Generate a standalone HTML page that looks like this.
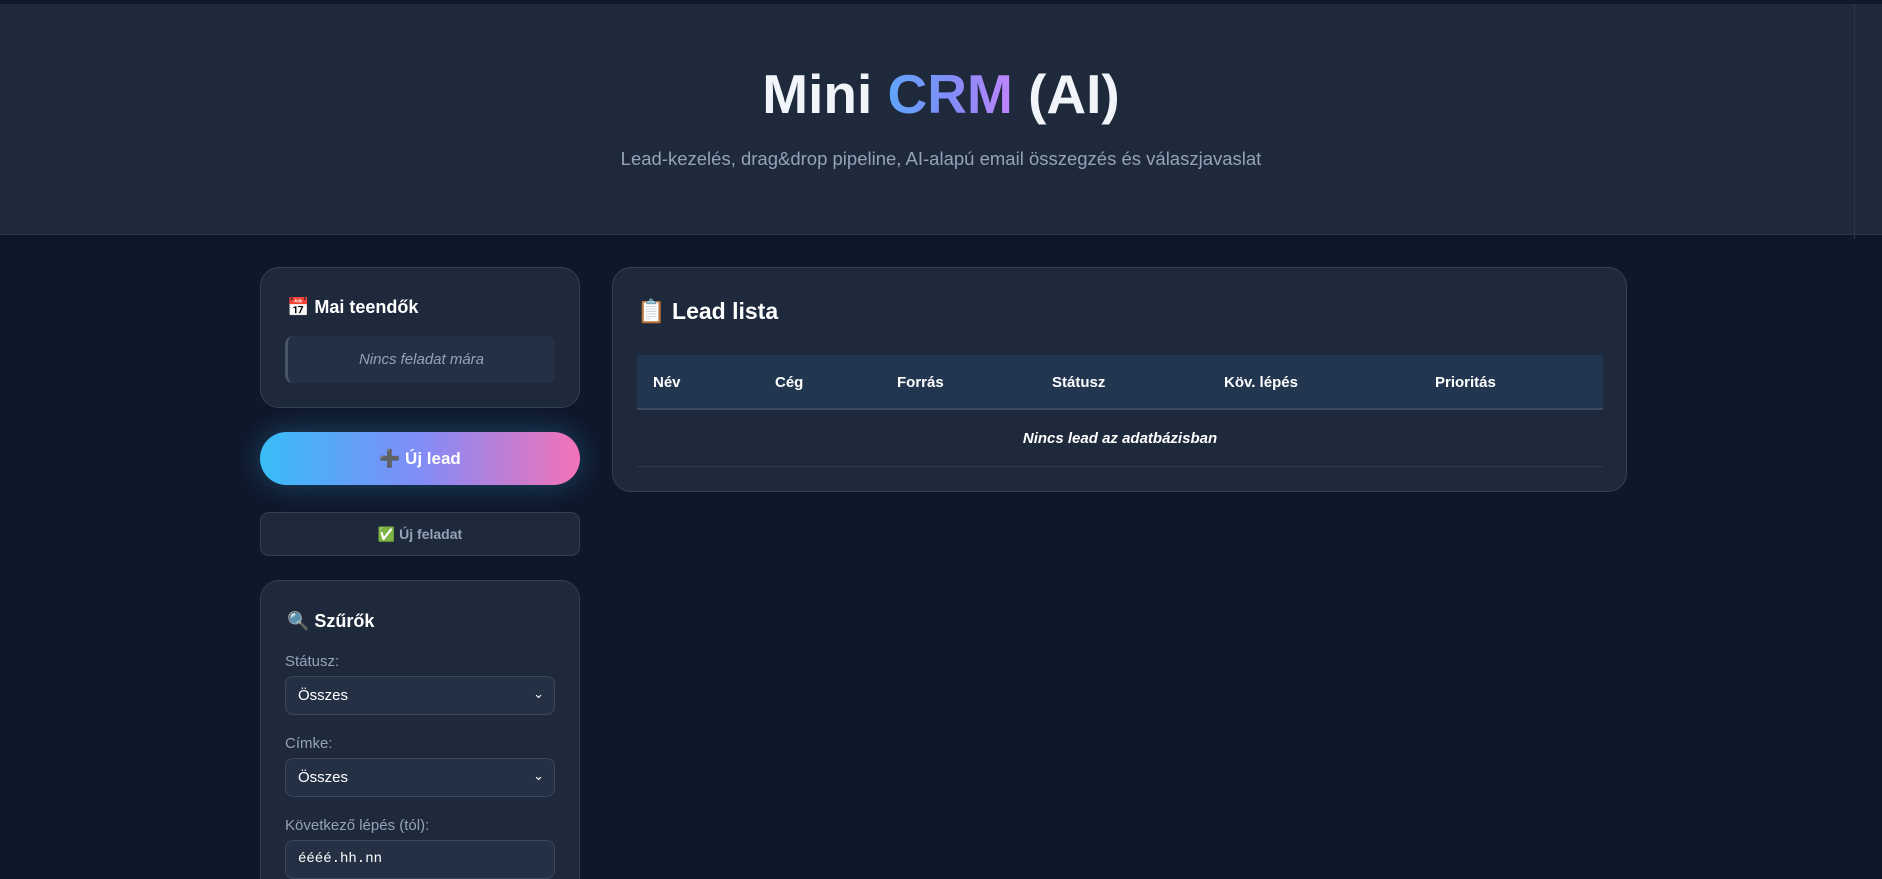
<!DOCTYPE html>
<html style="overflow:hidden;height:879px"><head><meta charset="utf-8"><style>
*{box-sizing:border-box;margin:0;padding:0}
body{width:1882px;height:879px;overflow:hidden;background:#0f172a;font-family:"Liberation Sans","DejaVu Sans",sans-serif;color:#f1f5f9;position:relative}
.hdr{position:absolute;left:0;top:0;width:1882px;height:235px;background:#1e293b;border-top:4px solid #111a2b;border-bottom:1px solid #2a3548}
.vl{position:absolute;left:1854px;top:0;width:1px;height:235px;background:#2a3548}
h1{position:absolute;top:58px;width:100%;text-align:center;font-size:55px;font-weight:bold;color:#f1f5f9}
.g{background:linear-gradient(90deg,#60a5fa,#818cf8,#c084fc);-webkit-background-clip:text;color:transparent}
.sub{position:absolute;top:144px;width:100%;text-align:center;font-size:18.5px;color:#94a3b8}
.card{position:absolute;background:#1e293b;border:1px solid #334155;border-radius:19px}
.ct{position:absolute;font-weight:bold;font-size:18px;color:#fff}
.lbl{position:absolute;left:24px;font-size:15px;color:#94a3b8}
.sel{position:absolute;left:24px;width:270px;height:39px;background:#243044;border:1px solid #3a475c;border-radius:8px;font-size:15px;color:#fff;padding:10px 12px}
.sel span.ch{position:absolute;right:10px;top:9px;font-size:13px}
.col{position:absolute;top:19px;font-weight:bold;font-size:15px;color:#fff}
</style></head><body>
<div class="hdr"><div class="vl"></div>
<h1>Mini <span class="g">CRM</span> (AI)</h1>
<div class="sub">Lead-kezelés, drag&amp;drop pipeline, AI-alapú email összegzés és válaszjavaslat</div></div>

<div class="card" style="left:260px;top:267px;width:320px;height:141px">
 <div class="ct" style="left:26px;top:29px">📅 Mai teendők</div>
 <div style="position:absolute;left:24px;top:68px;width:270px;height:47px;background:#243044;border-left:3px solid #475569;border-radius:8px;text-align:center;line-height:47px;font-style:italic;font-size:15px;color:#94a3b8">Nincs feladat mára</div>
</div>
<div style="position:absolute;left:260px;top:432px;width:320px;height:53px;border-radius:27px;background:linear-gradient(90deg,#38bdf8,#818cf8,#f472b6);box-shadow:0 0 30px rgba(56,189,248,.3);text-align:center;line-height:53px;font-weight:bold;font-size:17px;color:#fff">➕ Új lead</div>
<div style="position:absolute;left:260px;top:512px;width:320px;height:44px;border-radius:9px;background:#1e293b;border:1px solid #334155;text-align:center;line-height:42px;font-weight:bold;font-size:14px;color:#94a3b8">✅ Új feladat</div>

<div class="card" style="left:260px;top:580px;width:320px;height:299px;border-bottom:none;border-bottom-left-radius:0;border-bottom-right-radius:0">
 <div class="ct" style="left:26px;top:30px">🔍 Szűrők</div>
 <div class="lbl" style="top:72px">Státusz:</div>
 <div class="sel" style="top:95px">Összes<span class="ch">⌄</span></div>
 <div class="lbl" style="top:154px">Címke:</div>
 <div class="sel" style="top:177px">Összes<span class="ch">⌄</span></div>
 <div class="lbl" style="top:236px">Következő lépés (tól):</div>
 <div class="sel" style="top:259px;font-family:'Liberation Mono',monospace;font-size:14px">éééé.hh.nn</div>
</div>

<div class="card" style="left:612px;top:267px;width:1015px;height:225px">
 <div class="ct" style="left:24px;top:30px;font-size:23px">📋 Lead lista</div>
 <div style="position:absolute;left:24px;top:87px;width:966px;height:55px;background:#233650;border-bottom:2px solid #3a4a60">
  <div class="col" style="left:16px">Név</div><div class="col" style="left:138px">Cég</div><div class="col" style="left:260px">Forrás</div><div class="col" style="left:415px">Státusz</div><div class="col" style="left:587px">Köv. lépés</div><div class="col" style="left:798px">Prioritás</div>
 </div>
 <div style="position:absolute;left:24px;top:142px;width:966px;height:57px;border-bottom:1px solid #2c3a4f;text-align:center;line-height:57px;font-style:italic;font-weight:bold;font-size:15px;color:#fff">Nincs lead az adatbázisban</div>
</div>
</body></html>
